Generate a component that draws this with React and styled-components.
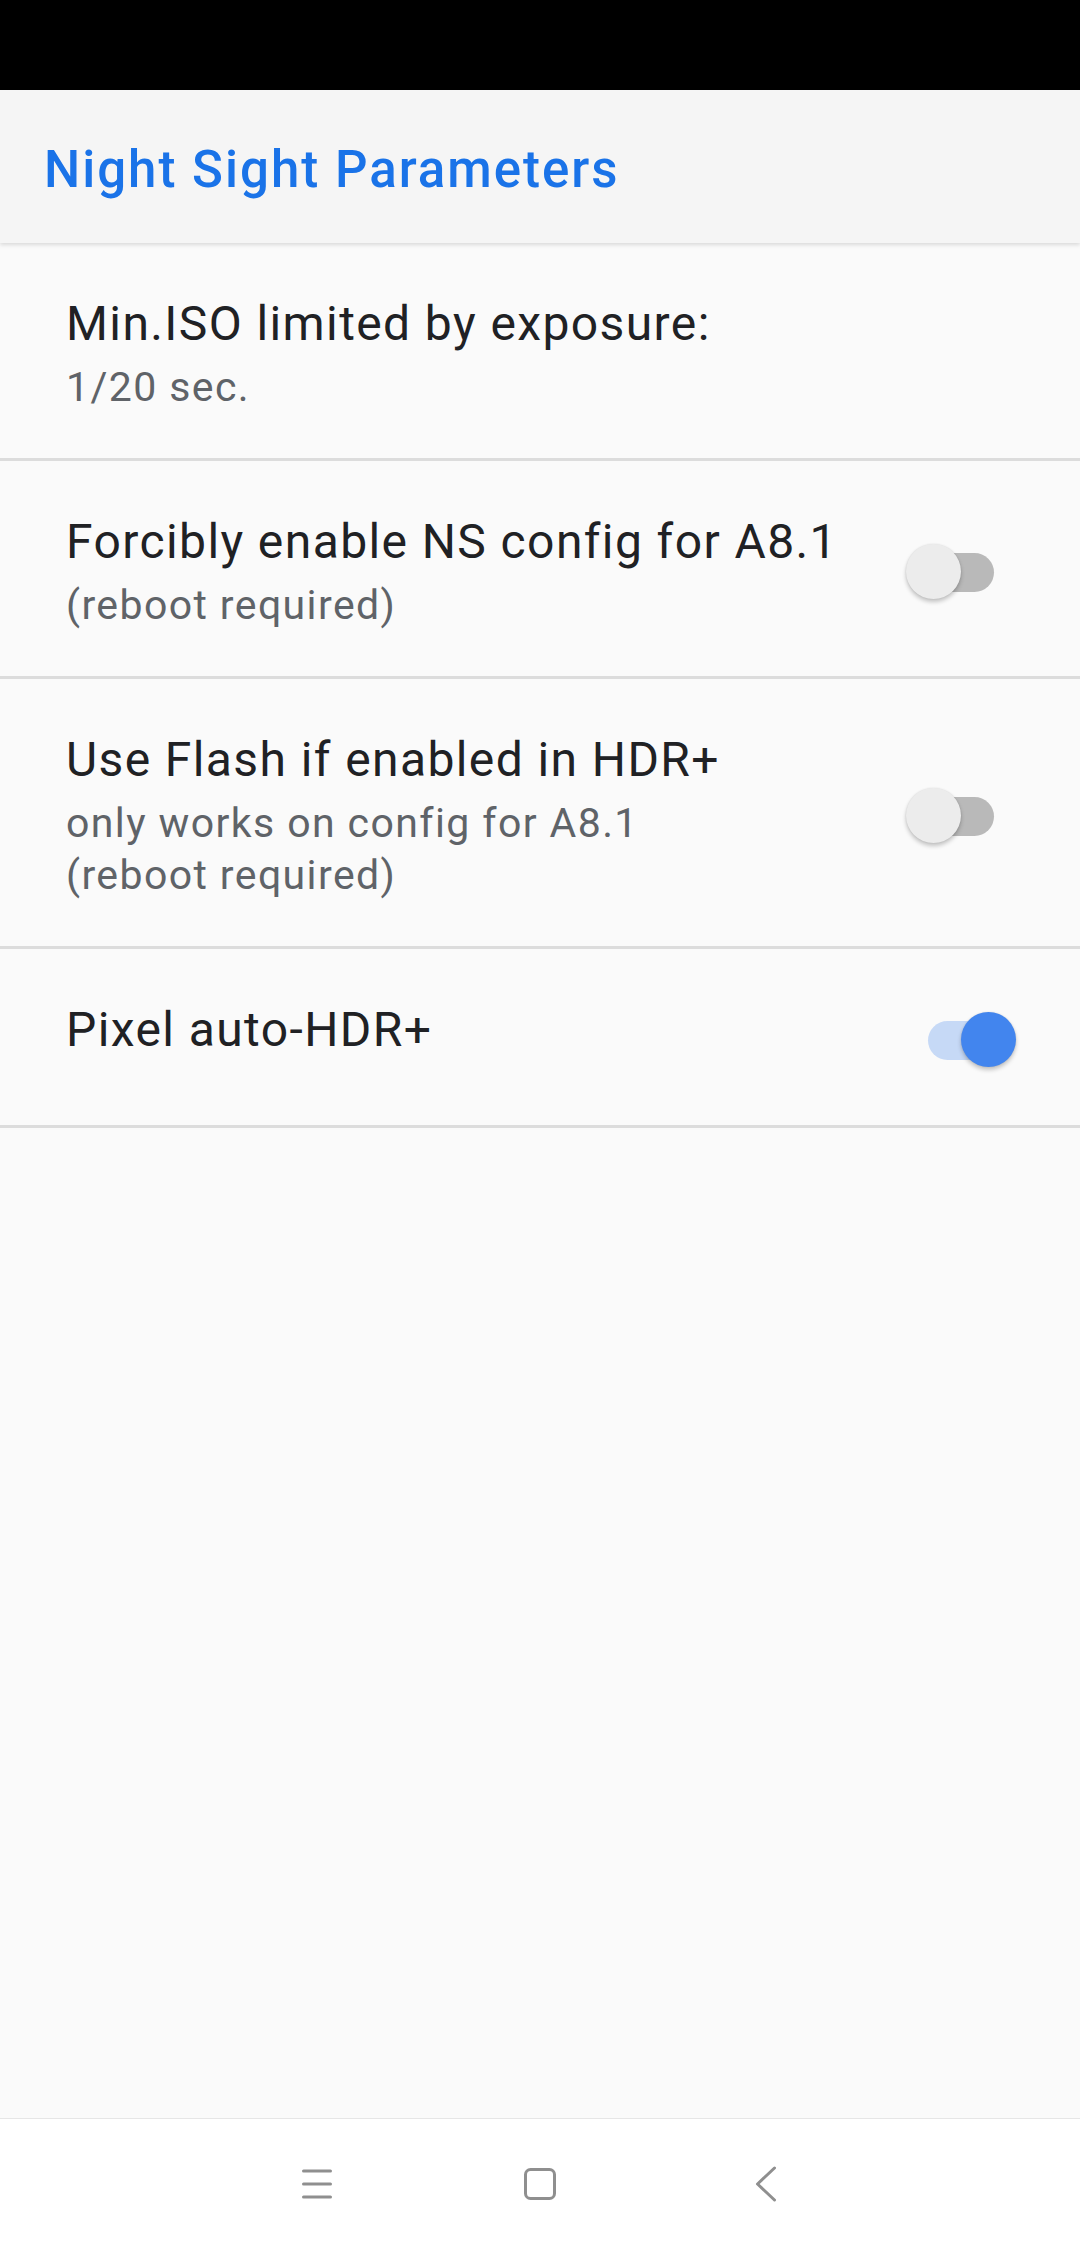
import React from "react"
import styled, { createGlobalStyle } from "styled-components"

const GlobalStyle = createGlobalStyle`
  html, body {
    margin: 0;
    padding: 0;
    background: #fafafa;
  }
  body {
    font-family: Roboto, "Noto Sans", "Liberation Sans", sans-serif;
    -webkit-font-smoothing: antialiased;
  }
`

const Screen = styled.div`
  display: flex;
  flex-direction: column;
  width: 1080px;
  height: 2248px;
  background: #fafafa;
`

const StatusBar = styled.div`
  height: 90px;
  background: #000;
  flex-shrink: 0;
`

const Toolbar = styled.header`
  position: relative;
  z-index: 1;
  display: flex;
  align-items: center;
  height: 153px;
  padding: 6px 0 0 44px;
  box-sizing: border-box;
  background: #f5f5f5;
  box-shadow: 0 2px 4px rgba(0, 0, 0, 0.13);
  flex-shrink: 0;
`

const Title = styled.h1`
  margin: 0;
  font-size: 51px;
  font-weight: 500;
  line-height: 60px;
  letter-spacing: 2px;
  color: #1a73e8;
`

const List = styled.main`
  flex: 1;
  display: flex;
  flex-direction: column;
`

const Row = styled.div`
  display: flex;
  align-items: ${(p) => (p.single ? "flex-start" : "center")};
  min-height: ${(p) => (p.single ? "80px" : "0")};
  padding: 51px 64px 45px 66px;
  border-bottom: 3px solid #dcdcdc;
`

const Texts = styled.div`
  flex: 1;
  display: flex;
  flex-direction: column;
`

const Primary = styled.div`
  font-size: 48px;
  line-height: 60px;
  letter-spacing: 1.4px;
  color: #202124;
`

const Secondary = styled.div`
  margin-top: 7px;
  font-size: 41px;
  line-height: 52px;
  letter-spacing: 1.4px;
  color: #5f6368;
`

const Switch = styled.div`
  position: relative;
  align-self: center;
  width: 110px;
  height: 56px;
  flex-shrink: 0;
`

const Track = styled.div`
  position: absolute;
  left: 22px;
  top: 9px;
  width: 66px;
  height: 39px;
  border-radius: 20px;
  background: ${(p) => (p.on ? "#c6d9f6" : "#b9b9b9")};
`

const Thumb = styled.div`
  position: absolute;
  top: 0;
  left: ${(p) => (p.on ? "55px" : "0")};
  width: 55px;
  height: 55px;
  border-radius: 50%;
  background: ${(p) => (p.on ? "#4285ee" : "#ececec")};
  box-shadow: 0 3px 4px rgba(0, 0, 0, 0.22), 0 0 2px rgba(0, 0, 0, 0.1);
`

const NavBar = styled.nav`
  display: flex;
  justify-content: center;
  align-items: center;
  height: 129px;
  background: #fff;
  border-top: 1px solid #e6e6e6;
  flex-shrink: 0;
`

const NavSlot = styled.div`
  display: flex;
  justify-content: center;
  align-items: center;
  box-sizing: border-box;
  width: 226px;
  padding-left: ${(p) => p.shift || 0}px;
`

const Toggle = ({ on }) => (
  <Switch>
    <Track on={on ? 1 : 0} />
    <Thumb on={on ? 1 : 0} />
  </Switch>
)

const prefs = [
  {
    title: "Min.ISO limited by exposure:",
    summary: ["1/20 sec."],
  },
  {
    title: "Forcibly enable NS config for A8.1",
    summary: ["(reboot required)"],
    toggle: false,
  },
  {
    title: "Use Flash if enabled in HDR+",
    summary: ["only works on config for A8.1", "(reboot required)"],
    toggle: false,
  },
  {
    title: "Pixel auto-HDR+",
    summary: [],
    toggle: true,
  },
]

const NAV = "#8f8f8f"

const App = () => (
  <Screen>
    <GlobalStyle />
    <StatusBar />
    <Toolbar>
      <Title>Night Sight Parameters</Title>
    </Toolbar>
    <List>
      {prefs.map((p) => (
        <Row key={p.title} single={p.summary.length === 0 ? 1 : 0}>
          <Texts>
            <Primary>{p.title}</Primary>
            {p.summary.length > 0 && (
              <Secondary>
                {p.summary.map((line) => (
                  <div key={line}>{line}</div>
                ))}
              </Secondary>
            )}
          </Texts>
          {p.toggle !== undefined && <Toggle on={p.toggle} />}
        </Row>
      ))}
    </List>
    <NavBar>
      <NavSlot shift={6}>
        <svg width="34" height="34" viewBox="0 0 34 34">
          <g stroke={NAV} strokeWidth="3" strokeLinecap="round">
            <line x1="3.5" y1="4" x2="30.5" y2="4" />
            <line x1="3.5" y1="17" x2="30.5" y2="17" />
            <line x1="3.5" y1="30" x2="30.5" y2="30" />
          </g>
        </svg>
      </NavSlot>
      <NavSlot>
        <svg width="34" height="34" viewBox="0 0 34 34">
          <rect x="2.5" y="2.5" width="29" height="29" rx="5" fill="none" stroke={NAV} strokeWidth="3" />
        </svg>
      </NavSlot>
      <NavSlot>
        <svg width="22" height="36" viewBox="0 0 22 36">
          <polyline points="19.5,2 2.5,18 19.5,34" fill="none" stroke={NAV} strokeWidth="3" strokeLinecap="round" strokeLinejoin="round" />
        </svg>
      </NavSlot>
    </NavBar>
  </Screen>
)

export default App
